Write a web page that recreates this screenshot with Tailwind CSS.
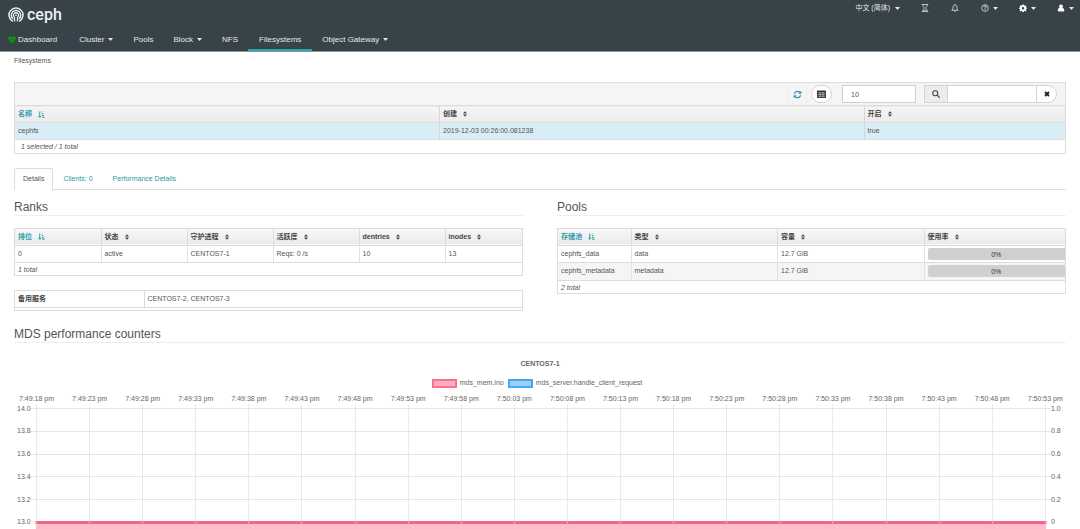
<!DOCTYPE html>
<html lang="en">
<head>
<meta charset="utf-8">
<title>Ceph - Filesystems</title>
<script src="https://cdn.jsdelivr.net/npm/@tailwindcss/browser@4"></script>
</head>
<body class="bg-white font-['Liberation_Sans','Noto_Sans_CJK_SC',sans-serif] text-[7px] leading-[10px] text-[#555]">

<svg class="hidden" xmlns="http://www.w3.org/2000/svg">
  <symbol id="caret" viewBox="0 0 10 6"><path d="M0 0h10L5 6z" fill="currentColor"/></symbol>
  <symbol id="sort" viewBox="0 0 10 14"><path d="M5 0l5 6H0zM0 8h10l-5 6z" fill="currentColor"/></symbol>
  <symbol id="sort-asc" viewBox="0 0 16 16"><path d="M4 1v13M1 11l3 3.500 3-3.500M9 2h1.500M9 6h3M9 10h4.500M9 14h6.500" fill="none" stroke="currentColor" stroke-width="2.200"/></symbol>
</svg>

<header class="border-b border-[#8d9498] bg-[#374249] text-[#e6e8e9]">
  <div class="flex items-start justify-between pl-2">
    <a href="#" class="flex h-[30px] items-center gap-[3px]" aria-label="ceph">
      <svg class="size-4" viewBox="0 0 32 32" fill="none" stroke="#eef0f1" stroke-width="3">
        <path d="M9.500 28.500A14 14 0 1 1 22.500 28.500"/>
        <path d="M10 23.500A9.300 9.300 0 1 1 22 23.500"/>
        <path d="M13 29V20.500A5 5 0 1 1 19 20.500V29" stroke-width="2.600"/>
        <circle cx="16" cy="16.500" r="1.700" fill="#eef0f1" stroke="none"/>
      </svg>
      <span class="font-['Roboto',sans-serif] text-[16px] leading-5 font-medium text-[#eef0f1]">ceph</span>
    </a>
    <div class="flex h-4 items-center pr-[6px]">
      <button class="mr-[21px] flex items-center gap-[5px]">中文 (简体)<svg class="h-[3px] w-[5px]"><use href="#caret"/></svg></button>
      <button class="mr-[22px]" aria-label="Tasks"><svg class="size-2" viewBox="0 0 16 16" fill="none" stroke="currentColor" stroke-width="1.500"><path d="M1.500 1h13M1.500 15h13M3.500 1c0 4 3 5.500 3 7s-3 3-3 7M12.500 1c0 4-3 5.500-3 7s3 3 3 7M5 12.500h6"/></svg></button>
      <button class="mr-[22px]" aria-label="Notifications"><svg class="size-2" viewBox="0 0 16 16" fill="none" stroke="currentColor" stroke-width="1.600"><path d="M8 .5V2M1.500 12.500c2-1.500 2.500-3.500 2.500-6C4 3.500 6 2 8 2s4 1.500 4 4.500c0 2.500.5 4.500 2.500 6zM6.500 13.500c.5 2 2.500 2 3 0"/></svg></button>
      <button class="mr-[21px] flex items-center gap-1" aria-label="Help"><svg class="size-2" viewBox="0 0 16 16" fill="none" stroke="currentColor" stroke-width="1.500"><circle cx="8" cy="8" r="6.700"/><path d="M5.500 6c.3-3.200 5-2.800 5 0 0 1.700-2.500 1.700-2.500 3.500M8 10.800v1.800" stroke-width="1.900"/></svg><svg class="h-[3px] w-[5px]"><use href="#caret"/></svg></button>
      <button class="mr-[21px] flex items-center gap-1" aria-label="Settings"><svg class="size-2" viewBox="0 0 16 16"><path fill="#fff" fill-rule="evenodd" d="M6.500 1h3l.4 2 1.200.5 1.700-1.200 2 2-1.200 1.700.5 1.100 2 .4v2l-2 .5-.5 1.200 1.200 1.700-2 2-1.700-1.200-1.200.5-.4 2h-3l-.4-2-1.200-.5-1.700 1.200-2-2 1.200-1.700L1.900 10 0 9.500v-2l2-.4.5-1.100-1.300-1.700 2-2 1.700 1.200 1.200-.5zM8 5.800a2.500 2.500 0 1 0 0 5 2.500 2.500 0 0 0 0-5z"/></svg><svg class="h-[3px] w-[5px]"><use href="#caret"/></svg></button>
      <button class="flex items-center gap-1" aria-label="User"><svg class="size-2" viewBox="0 0 16 16"><path fill="#fff" d="M8 1a3.800 3.800 0 0 1 2.700 6.500c2.800.7 3.800 3 3.800 5.500 0 1.300-.8 2-2 2h-9c-1.200 0-2-.7-2-2 0-2.500 1-4.800 3.800-5.500A3.800 3.800 0 0 1 8 1z"/></svg><svg class="h-[3px] w-[5px]"><use href="#caret"/></svg></button>
    </div>
  </div>
  <nav class="flex h-[21px] text-[8px]">
    <a href="#" class="flex items-center gap-[2px] border-b-2 border-transparent pr-3 pl-2"><svg class="size-2" viewBox="0 0 16 16"><path fill="#0a9b12" d="M8 15L1.500 8.500C-1.500 5 1 1 4.300 1 6 1 7.300 2 8 3c.7-1 2-2 3.700-2C15 1 17.500 5 14.500 8.500z"/><path d="M1 8h4l1.500-3L9 10.500 10.500 8H15" fill="none" stroke="#374249"/></svg>Dashboard</a>
    <a href="#" class="flex items-center gap-1 border-b-2 border-transparent px-[10px]">Cluster<svg class="h-[3px] w-[5px]"><use href="#caret"/></svg></a>
    <a href="#" class="flex items-center border-b-2 border-transparent px-[10px]">Pools</a>
    <a href="#" class="flex items-center gap-1 border-b-2 border-transparent px-[10px]">Block<svg class="h-[3px] w-[5px]"><use href="#caret"/></svg></a>
    <a href="#" class="flex items-center border-b-2 border-transparent px-[10px]">NFS</a>
    <a href="#" class="flex items-center border-b-2 border-[#2fa6b3] px-[11px]" aria-current="page">Filesystems</a>
    <a href="#" class="flex items-center gap-1 border-b-2 border-transparent px-[10px]">Object Gateway<svg class="h-[3px] w-[5px]"><use href="#caret"/></svg></a>
  </nav>
</header>

<main class="px-[14px] pt-1">
  <div class="h-[26px] leading-[10px]">Filesystems</div>

  <section class="border border-[#dcdcdc]">
    <div class="flex h-[22px] items-center justify-end bg-[#f5f5f5] pr-2">
      <button class="mr-1 flex h-[18px] w-[19px] items-center justify-center border-x border-[#ececec] text-[#2b99a8]" aria-label="Refresh"><svg class="size-[9px]" viewBox="0 0 1792 1792"><path fill="currentColor" d="M1639 1056q0 5-1 7-64 268-268 434.500t-478 166.500q-146 0-282.500-55t-243.500-157l-129 129q-19 19-45 19t-45-19-19-45v-448q0-26 19-45t45-19h448q26 0 45 19t19 45-19 45l-137 137q71 66 161 102t187 36q134 0 250-65t186-179q11-17 53-117 8-23 30-23h192q13 0 22.500 9.500t9.500 22.500zm25-800v448q0 26-19 45t-45 19h-448q-26 0-45-19t-19-45 19-45l138-138q-148-137-349-137-134 0-250 65t-186 179q-11 17-53 117-8 23-30 23h-199q-13 0-22.500-9.500t-9.500-22.500v-7q65-268 270-434.500t480-166.500q146 0 284 55.500t245 156.500l130-129q19-19 45-19t45 19 19 45z"/></svg></button>
      <button class="mr-[10px] flex h-[18px] w-[21px] items-center justify-center rounded-full border border-[#d8d8d8] bg-white" aria-label="Columns"><svg class="size-[9px]" viewBox="0 0 18 16"><rect width="18" height="15" rx="1" fill="#333"/><path d="M1.500 4.500h15M1.500 8h15M1.500 11.500h15M6 3v11M12 3v11" stroke="#ccc" stroke-width="1.200"/></svg></button>
      <input type="number" value="10" aria-label="Page size" class="mr-2 h-[18px] w-[74px] appearance-none border border-[#d0d0d0] bg-white pl-2">
      <div class="flex h-[18px]">
        <label for="search" class="flex w-[23px] items-center justify-center border border-r-0 border-[#d4d4d4] bg-[#ececec]" aria-label="Search"><svg class="size-2" viewBox="0 0 16 16" fill="none" stroke="#444" stroke-width="2.200"><circle cx="6.500" cy="6.500" r="5"/><path d="M10.500 10.500l5 5"/></svg></label>
        <input id="search" type="text" class="w-[90px] border border-[#d4d4d4] bg-white px-1">
        <button class="flex w-5 items-center justify-center rounded-r-full border border-l-0 border-[#d4d4d4] bg-white" aria-label="Clear"><svg class="size-[6px]" viewBox="0 0 12 12"><path d="M2 2l8 8M10 2l-8 8" stroke="#222" stroke-width="3.600"/></svg></button>
      </div>
    </div>
    <table class="w-full table-fixed border-collapse text-left">
      <colgroup><col><col><col class="w-[201px]"></colgroup>
      <thead><tr class="h-[17px] border-y border-[#dcdcdc] bg-linear-to-b from-[#f5f5f5] to-[#ebebeb] text-[#444]">
        <th class="border-r border-[#d8d8d8] px-[3px] text-[#2b99a8]"><span class="flex items-center gap-[6px]">名称<svg class="size-[7px]"><use href="#sort-asc"/></svg></span></th>
        <th class="border-r border-[#d8d8d8] px-[3px]"><span class="flex items-center gap-[6px]">创建<svg class="h-[6px] w-1"><use href="#sort"/></svg></span></th>
        <th class="px-[3px]"><span class="flex items-center gap-[6px]">开启<svg class="h-[6px] w-1"><use href="#sort"/></svg></span></th>
      </tr></thead>
      <tbody><tr class="h-[17px] border-b border-[#dcdcdc] bg-[#d9edf7]">
        <td class="border-r border-[#c9dbe4] px-[3px]">cephfs</td>
        <td class="border-r border-[#c9dbe4] px-[3px]">2019-12-03 00:26:00.081238</td>
        <td class="px-[3px]">true</td>
      </tr></tbody>
    </table>
    <div class="h-[13px] pt-[2px] pl-[6px] italic">1 selected / 1 total</div>
  </section>

  <div class="mt-[14px] flex h-[22px] border-b border-[#ddd] text-[#2b99a8]" role="tablist">
    <button role="tab" aria-selected="true" class="-mb-px rounded-t-xs border border-b-0 border-[#ddd] bg-white px-2 pb-[2px] text-[#555]">Details</button>
    <button role="tab" class="px-[10px]">Clients: 0</button>
    <button role="tab" class="px-[10px]">Performance Details</button>
  </div>

  <div class="grid grid-cols-2 gap-x-[34px] pt-[10px]">
    <section>
      <h2 class="mb-3 border-b border-[#eee] text-[12px] leading-[15px]">Ranks</h2>
      <div class="border border-[#dcdcdc]">
        <table class="w-full table-fixed border-collapse text-left">
          <colgroup><col class="w-[86px]"><col class="w-[86px]"><col class="w-[86px]"><col class="w-[86px]"><col class="w-[86px]"><col></colgroup>
          <thead><tr class="h-4 border-b border-[#dcdcdc] bg-linear-to-b from-[#f7f7f7] to-[#ebebeb] text-[#444]">
            <th class="border-r border-[#dcdcdc] px-[3px] text-[#2b99a8]"><span class="flex items-center gap-[6px]">排位<svg class="size-[7px]"><use href="#sort-asc"/></svg></span></th>
            <th class="border-r border-[#dcdcdc] px-[3px]"><span class="flex items-center gap-[6px]">状态<svg class="h-[6px] w-1"><use href="#sort"/></svg></span></th>
            <th class="border-r border-[#dcdcdc] px-[3px]"><span class="flex items-center gap-[6px]">守护进程<svg class="h-[6px] w-1"><use href="#sort"/></svg></span></th>
            <th class="border-r border-[#dcdcdc] px-[3px]"><span class="flex items-center gap-[6px]">活跃度<svg class="h-[6px] w-1"><use href="#sort"/></svg></span></th>
            <th class="border-r border-[#dcdcdc] px-[3px]"><span class="flex items-center gap-[6px]">dentries<svg class="h-[6px] w-1"><use href="#sort"/></svg></span></th>
            <th class="px-[3px]"><span class="flex items-center gap-[6px]">inodes<svg class="h-[6px] w-1"><use href="#sort"/></svg></span></th>
          </tr></thead>
          <tbody><tr class="h-[17px] border-b border-[#dcdcdc]">
            <td class="border-r border-[#e2e2e2] px-[3px]">0</td>
            <td class="border-r border-[#e2e2e2] px-[3px]">active</td>
            <td class="border-r border-[#e2e2e2] px-[3px]">CENTOS7-1</td>
            <td class="border-r border-[#e2e2e2] px-[3px]">Reqs: 0 /s</td>
            <td class="border-r border-[#e2e2e2] px-[3px]">10</td>
            <td class="px-[3px]">13</td>
          </tr></tbody>
        </table>
        <div class="h-3 pt-[2px] pl-[3px] leading-[10px] italic">1 total</div>
      </div>
      <div class="mt-[14px] border border-[#dcdcdc] pb-[2px]">
        <table class="w-full table-fixed border-collapse text-left">
          <tbody><tr class="h-[17px] border-b border-[#dcdcdc]">
            <th class="w-[129px] border-r border-[#dcdcdc] px-[3px] text-[#444]">备用服务</th>
            <td class="px-[3px]">CENTOS7-2, CENTOS7-3</td>
          </tr></tbody>
        </table>
      </div>
    </section>

    <section>
      <h2 class="mb-3 border-b border-[#eee] text-[12px] leading-[15px]">Pools</h2>
      <div class="border border-[#dcdcdc]">
        <table class="w-full table-fixed border-collapse text-left">
          <colgroup><col class="w-[73px]"><col><col><col class="w-[141px]"></colgroup>
          <thead><tr class="h-4 border-b border-[#dcdcdc] bg-linear-to-b from-[#f7f7f7] to-[#ebebeb] text-[#444]">
            <th class="border-r border-[#dcdcdc] px-[3px] text-[#2b99a8]"><span class="flex items-center gap-[6px]">存储池<svg class="size-[7px]"><use href="#sort-asc"/></svg></span></th>
            <th class="border-r border-[#dcdcdc] px-[3px]"><span class="flex items-center gap-[6px]">类型<svg class="h-[6px] w-1"><use href="#sort"/></svg></span></th>
            <th class="border-r border-[#dcdcdc] px-[3px]"><span class="flex items-center gap-[6px]">容量<svg class="h-[6px] w-1"><use href="#sort"/></svg></span></th>
            <th class="px-[3px]"><span class="flex items-center gap-[6px]">使用率<svg class="h-[6px] w-1"><use href="#sort"/></svg></span></th>
          </tr></thead>
          <tbody>
            <tr class="h-[17px] border-b border-[#dcdcdc]">
              <td class="border-r border-[#e2e2e2] px-[3px]">cephfs_data</td>
              <td class="border-r border-[#e2e2e2] px-[3px]">data</td>
              <td class="border-r border-[#e2e2e2] px-[3px]">12.7 GiB</td>
              <td class="pl-[3px]"><div class="h-3 rounded-l-xs bg-[#d0d0d0] text-center leading-[13px] text-[#333]">0%</div></td>
            </tr>
            <tr class="h-[18px] border-b border-[#dcdcdc] bg-[#f5f5f5]">
              <td class="border-r border-[#e2e2e2] px-[3px]">cephfs_metadata</td>
              <td class="border-r border-[#e2e2e2] px-[3px]">metadata</td>
              <td class="border-r border-[#e2e2e2] px-[3px]">12.7 GiB</td>
              <td class="pl-[3px]"><div class="h-3 rounded-l-xs bg-[#d0d0d0] text-center leading-[13px] text-[#333]">0%</div></td>
            </tr>
          </tbody>
        </table>
        <div class="h-3 pt-[2px] pl-[3px] leading-[10px] italic">2 total</div>
      </div>
    </section>
  </div>

  <section>
    <h2 class="mt-[15px] border-b border-[#eee] text-[12px] leading-[16px]">MDS performance counters</h2>
    <div class="mt-4 text-center font-bold text-[#666]">CENTOS7-1</div>
    <div class="mt-[9px] mr-[6px] flex justify-center gap-1 text-[#666]">
      <span class="flex items-center gap-[3px]"><i class="h-[9px] w-[25px] border-2 border-[#ff6384]/85 bg-[#ffb1c1]"></i>mds_mem.ino</span>
      <span class="flex items-center gap-[3px]"><i class="h-[9px] w-[25px] border-2 border-[#36a2eb]/85 bg-[#9ad0f5]"></i>mds_server.handle_client_request</span>
    </div>

    <div class="mt-[6px] flex text-[#666]">
      <div class="mt-[14px] flex h-[115px] w-[22px] flex-col justify-between pl-[3px]">
        <span class="flex h-px items-center">14.0</span><span class="flex h-px items-center">13.8</span><span class="flex h-px items-center">13.6</span><span class="flex h-px items-center">13.4</span><span class="flex h-px items-center">13.2</span><span class="flex h-px items-center">13.0</span>
      </div>
      <div class="grid flex-1">
        <!-- horizontal grid lines, series line and area fill -->
        <div class="col-start-1 row-start-1 flex flex-col pt-[14px]">
          <div class="-mx-[5px] flex h-[114px] flex-col">
            <i class="flex-1 border-t border-black/10"></i><i class="flex-1 border-t border-black/10"></i><i class="flex-1 border-t border-black/10"></i><i class="flex-1 border-t border-black/10"></i><i class="flex-1 border-t border-black/10"></i>
          </div>
          <i class="-mt-px h-[3px] bg-[#f0668a]"></i>
          <i class="h-[5px] bg-[#ffbccb]"></i>
        </div>
        <!-- time labels, ticks and data points -->
        <div id="ticks" class="col-start-1 row-start-1 flex justify-between"></div>
      </div>
      <div class="mt-[14px] flex h-[115px] w-5 flex-col justify-between pl-[5px]">
        <span class="flex h-px items-center">1.0</span><span class="flex h-px items-center">0.8</span><span class="flex h-px items-center">0.6</span><span class="flex h-px items-center">0.4</span><span class="flex h-px items-center">0.2</span><span class="flex h-px items-center">0</span>
      </div>
    </div>
  </section>
</main>

<script>
  const start = 7 * 3600 + 49 * 60 + 18;
  const pad = n => String(n).padStart(2, '0');
  document.getElementById('ticks').innerHTML = Array.from({ length: 20 }, (_, i) => {
    const t = start + i * 5;
    const label = `${Math.floor(t / 3600)}:${pad(Math.floor(t / 60) % 60)}:${pad(t % 60)} pm`;
    return `<div class="flex w-px flex-col items-center whitespace-nowrap"><span class="h-[10px]">${label}</span><i class="h-[117px] w-px bg-black/8"></i><i class="size-[3px] rounded-full border border-[#f0668a] bg-[#ffd0da]"></i></div>`;
  }).join('');
</script>
</body>
</html>
